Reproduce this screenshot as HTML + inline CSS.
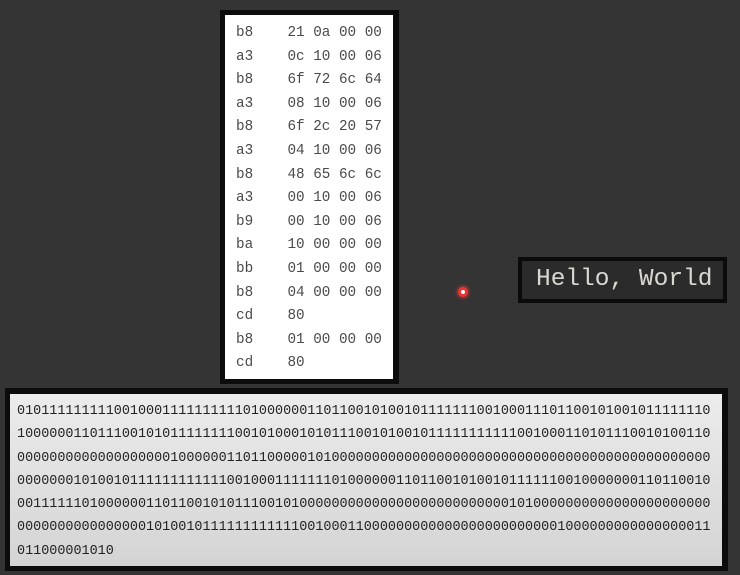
<!DOCTYPE html>
<html><head><style>
body{margin:0;width:740px;height:575px;overflow:hidden;background:#343434;position:relative;font-family:"Liberation Mono",monospace}
#hex{position:absolute;left:220px;top:10px;width:168px;height:364px;border:5px solid #0c0c0c;border-right-width:6px;background:#fff;}
#hex div{position:absolute;left:11px;font-size:14.3px;color:#4a4a4a;white-space:pre;line-height:16px}
#hello{position:absolute;left:518px;top:257px;height:38px;border:4px solid #0b0b0b;background:#2b2b2b;color:#d8d8d0;font-size:24.5px;line-height:38px;padding-left:14px;box-sizing:content-box;width:187px}
#bin{position:absolute;left:5px;top:388px;width:712px;height:172px;border:5px solid #0c0c0c;border-width:6px 6px 5px 5px;background:linear-gradient(#ececec,#d4d4d4);}
#bin pre{margin:0;position:absolute;left:7px;top:6px;font-family:"Liberation Mono",monospace;font-size:13.45px;line-height:23.3px;color:#222}
#dot{position:absolute;left:458px;top:287px;width:10px;height:10px;border-radius:50%;background:#e33;box-shadow:0 0 5px #f44}
#dot:after{content:"";position:absolute;left:3px;top:3px;width:4px;height:4px;border-radius:50%;background:#fff}
</style></head><body>
<div id="hex">
<div style="top:10px">b8    21 0a 00 00</div>
<div style="top:33.6px">a3    0c 10 00 06</div>
<div style="top:57.2px">b8    6f 72 6c 64</div>
<div style="top:80.8px">a3    08 10 00 06</div>
<div style="top:104.4px">b8    6f 2c 20 57</div>
<div style="top:128px">a3    04 10 00 06</div>
<div style="top:151.6px">b8    48 65 6c 6c</div>
<div style="top:175.2px">a3    00 10 00 06</div>
<div style="top:198.8px">b9    00 10 00 06</div>
<div style="top:222.4px">ba    10 00 00 00</div>
<div style="top:246px">bb    01 00 00 00</div>
<div style="top:269.6px">b8    04 00 00 00</div>
<div style="top:293.2px">cd    80</div>
<div style="top:316.8px">b8    01 00 00 00</div>
<div style="top:340.4px">cd    80</div>
</div>
<div id="dot"></div>
<div id="hello">Hello, World</div>
<div id="bin"><pre>01011111111100100011111111110100000011011001010010111111100100011101100101001011111110
10000001101110010101111111100101000101011100101001011111111111001000110101110010100110
00000000000000000001000000110110000010100000000000000000000000000000000000000000000000
00000001010010111111111111001000111111101000000110110010100101111110010000000110110010
00111111010000001101100101011100101000000000000000000000000001010000000000000000000000
00000000000000001010010111111111111001000110000000000000000000000001000000000000000011
011000001010</pre></div>
</body></html>
